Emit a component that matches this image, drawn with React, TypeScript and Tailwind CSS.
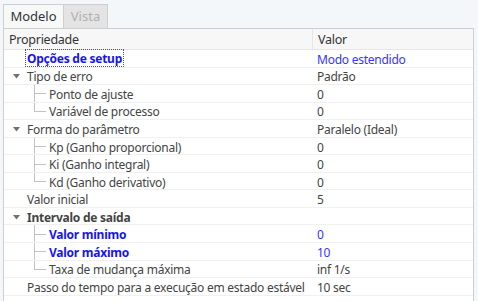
import React from "react";

type Row = {
  label: string;
  value: string;
  level: 0 | 1;
  expander?: boolean;
  bold?: boolean;
  blue?: boolean;
  blueValue?: boolean;
  focus?: boolean;
  last?: boolean;
};

const rows: Row[] = [
  { label: "Opções de setup", value: "Modo estendido", level: 0, bold: true, blue: true, blueValue: true, focus: true },
  { label: "Tipo de erro", value: "Padrão", level: 0, expander: true },
  { label: "Ponto de ajuste", value: "0", level: 1 },
  { label: "Variável de processo", value: "0", level: 1, last: true },
  { label: "Forma do parâmetro", value: "Paralelo (Ideal)", level: 0, expander: true },
  { label: "Kp (Ganho proporcional)", value: "0", level: 1 },
  { label: "Ki (Ganho integral)", value: "0", level: 1 },
  { label: "Kd (Ganho derivativo)", value: "0", level: 1, last: true },
  { label: "Valor inicial", value: "5", level: 0 },
  { label: "Intervalo de saída", value: "", level: 0, expander: true, bold: true },
  { label: "Valor mínimo", value: "0", level: 1, bold: true, blue: true, blueValue: true },
  { label: "Valor máximo", value: "10", level: 1, bold: true, blue: true, blueValue: true },
  { label: "Taxa de mudança máxima", value: "inf 1/s", level: 1, last: true },
  { label: "Passo do tempo para a execução em estado estável", value: "10 sec", level: 0 },
];

function Tree({ last }: { last?: boolean }) {
  return (
    <div className="relative w-[23px] h-full shrink-0 ml-[22px]">
      <div className={"absolute left-[8px] top-0 w-px bg-[#c2c2c2] " + (last ? "h-1/2" : "h-full")} />
      <div className="absolute left-[8px] top-1/2 h-px w-[12px] bg-[#c2c2c2]" />
    </div>
  );
}

export default function App() {
  return (
    <div
      className="w-[478px] h-[301px] bg-[#f3f7f9] overflow-hidden text-[12px] tracking-[-0.25px] text-[#444]"
      style={{ fontFamily: '"Noto Sans", "Open Sans", sans-serif' }}
    >
      <div className="flex pl-[3px] pt-[4px] h-[28px]">
        <div className="w-[61px] h-[24px] pt-[1px] border border-b-0 border-[#cfcfcf] bg-[#f7f8f8] flex items-center justify-center text-[13px] tracking-normal text-[#333]">
          Modelo
        </div>
        <div className="w-[44px] h-[24px] pt-[1px] border border-l-0 border-b-0 border-[#cfcfcf] bg-[#e4e4e4] flex items-center justify-center text-[13px] tracking-normal text-[#b0b0b0]">
          Vista
        </div>
      </div>
      <div className="ml-[3px] w-[471px] border border-[#cfcfcf] bg-white h-[300px]">
        <div className="flex h-[21px] bg-[#f7f7f7] border-b border-[#e6e6e6] leading-none text-[12.5px]">
          <div className="w-[309px] pl-[5px] pt-[3px] flex items-center border-r border-[#e6e6e6] text-[#333]">Propriedade</div>
          <div className="flex-1 pl-[5px] pt-[3px] flex items-center text-[#333]">Valor</div>
        </div>
        {rows.map((r, i) => (
          <div key={i} className="flex h-[17.55px] border-b border-[#f0f0f0] leading-none">
            <div className="w-[309px] flex items-center h-full">
              {r.level === 0 ? (
                <div className="w-[23px] h-full shrink-0 flex items-center justify-center pl-[2px]">
                  {r.expander && (
                    <svg width="7" height="5" viewBox="0 0 7 5" className="mt-[2px]">
                      <path d="M0 0 L7 0 L3.5 4.5 Z" fill="#707070" />
                    </svg>
                  )}
                </div>
              ) : (
                <Tree last={r.last} />
              )}
              <span
                className={
                  "whitespace-nowrap pt-[3px] " +
                  (r.bold ? "font-bold " : "") +
                  (r.blue ? "text-[#1515f0] " : "") +
                  (r.focus ? "outline outline-1 outline-dotted outline-[#555] px-[1px] pb-[1px] -ml-[1px]" : "")
                }
              >
                {r.label}
              </span>
            </div>
            <div className={"flex-1 pl-[4px] pt-[3px] flex items-center " + (r.blueValue ? "text-[#3535ff]" : "")}>
              {r.value}
            </div>
          </div>
        ))}
      </div>
    </div>
  );
}
